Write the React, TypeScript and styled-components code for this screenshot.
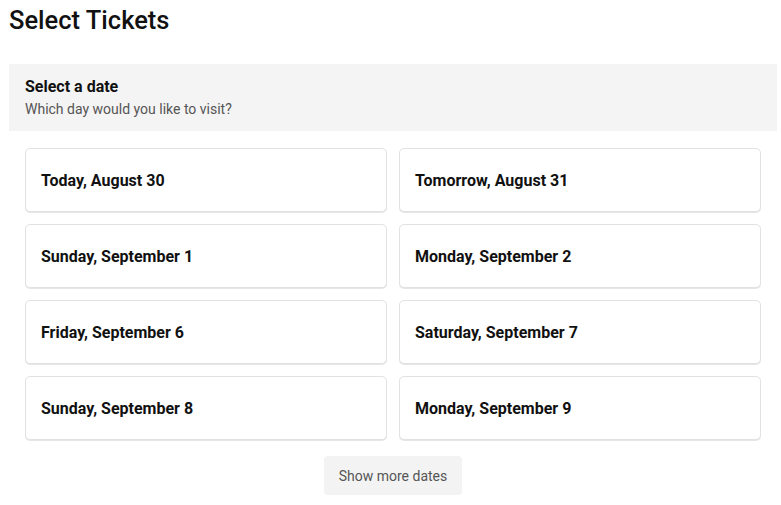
import React from "react";
import styled, { createGlobalStyle } from "styled-components";

const GlobalStyle = createGlobalStyle`
  body {
    margin: 0;
    background: #fff;
    font-family: Roboto, "Open Sans", Arial, sans-serif;
    color: #111;
  }
`;

const Page = styled.div`
  padding: 0 4px 0 9px;
`;

const Title = styled.h1`
  margin: 0;
  padding-top: 4px;
  height: 60px;
  font-size: 25.5px;
  font-weight: 500;
  line-height: 32px;
  color: #111;
`;

const Panel = styled.div`
  background: #f4f4f4;
  padding: 13px 16px 12px;
`;

const PanelTitle = styled.div`
  font-size: 16px;
  font-weight: 700;
  line-height: 20px;
  color: #111;
`;

const PanelSub = styled.div`
  margin-top: 2px;
  font-size: 14px;
  line-height: 20px;
  color: #555;
`;

const Grid = styled.div`
  display: grid;
  grid-template-columns: 1fr 1fr;
  column-gap: 12px;
  row-gap: 12px;
  padding: 17px 16px 16px;
`;

const DateCard = styled.button`
  display: flex;
  align-items: center;
  height: 64px;
  padding: 1px 15px 0;
  background: #fff;
  border: 1px solid #e2e2e2;
  border-radius: 5px;
  box-shadow: 0 1px 0 #e6e6e6;
  font-family: inherit;
  font-size: 16px;
  font-weight: 700;
  color: #111;
  text-align: left;
  cursor: pointer;
`;

const Footer = styled.div`
  display: flex;
  justify-content: center;
`;

const MoreButton = styled.button`
  width: 138px;
  height: 39px;
  padding-bottom: 1px;
  background: #f3f3f3;
  border: none;
  border-radius: 4px;
  font-family: inherit;
  font-size: 14px;
  color: #555;
  cursor: pointer;
`;

const dates = [
  "Today, August 30",
  "Tomorrow, August 31",
  "Sunday, September 1",
  "Monday, September 2",
  "Friday, September 6",
  "Saturday, September 7",
  "Sunday, September 8",
  "Monday, September 9",
];

const App = () => {
  return (
    <Page>
      <GlobalStyle />
      <Title>Select Tickets</Title>
      <Panel>
        <PanelTitle>Select a date</PanelTitle>
        <PanelSub>Which day would you like to visit?</PanelSub>
      </Panel>
      <Grid>
        {dates.map((d) => (
          <DateCard key={d}>{d}</DateCard>
        ))}
      </Grid>
      <Footer>
        <MoreButton>Show more dates</MoreButton>
      </Footer>
    </Page>
  );
};

export default App;
